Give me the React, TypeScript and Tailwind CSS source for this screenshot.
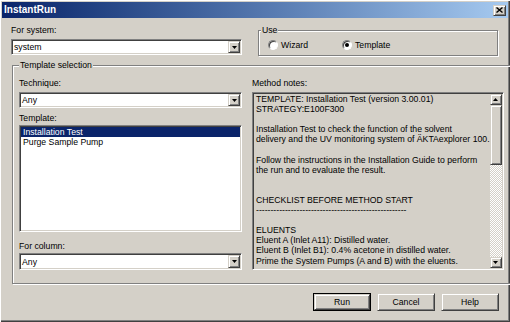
import React from "react";

const sunken =
  "border border-t-[#808080] border-l-[#808080] border-r-white border-b-white p-px shadow-[inset_1px_1px_0_#404040,inset_-1px_-1px_0_#d4d0c8]";
const raised =
  "border border-t-[#d4d0c8] border-l-[#d4d0c8] border-r-[#404040] border-b-[#404040] shadow-[inset_1px_1px_0_#fff,inset_-1px_-1px_0_#808080] bg-[#d4d0c8]";
const etched =
  "border border-[#808080] shadow-[inset_1px_1px_0_#fff,1px_1px_0_#fff]";

function Arrow({ up = false }: { up?: boolean }) {
  return (
    <svg width="5" height="3" viewBox="0 0 5 3" className={up ? "rotate-180" : ""}>
      <polygon points="0,0 5,0 2.5,3" fill="#000" />
    </svg>
  );
}

function Combo({ value, h }: { value: string; h: string }) {
  return (
    <div className={`${sunken} ${h} bg-white flex`}>
      <div className="flex-1 flex items-center pl-px">{value}</div>
      <div className={`${raised} w-[12px] flex items-center justify-center`}>
        <Arrow />
      </div>
    </div>
  );
}

function Radio({ checked, label }: { checked?: boolean; label: string }) {
  return (
    <div className="flex items-center gap-[3px] w-[74px]">
      <span className="w-[10px] h-[10px] rounded-full border border-t-[#808080] border-l-[#808080] border-r-white border-b-white bg-white shadow-[inset_1px_1px_0_#404040] flex items-center justify-center">
        {checked && <span className="w-[4px] h-[4px] rounded-full bg-black" />}
      </span>
      <span>{label}</span>
    </div>
  );
}

function Btn({ label, def }: { label: string; def?: boolean }) {
  return (
    <button className={`w-[58px] h-[18px] ${def ? "border border-black" : ""}`}>
      <span className={`${raised} w-full h-full flex items-center justify-center`}>{label}</span>
    </button>
  );
}

const notes = [
  "TEMPLATE: Installation Test (version 3.00.01)",
  "STRATEGY:E100F300",
  "",
  "Installation Test to check the function of the solvent",
  "delivery and the UV monitoring system of ÄKTAexplorer 100.",
  "",
  "Follow the instructions in the Installation Guide to perform",
  "the run and to evaluate the result.",
  "",
  "",
  "CHECKLIST BEFORE METHOD START",
  "----------------------------------------------------",
  "",
  "ELUENTS",
  "Eluent A (Inlet A11): Distilled water.",
  "Eluent B (Inlet B1): 0.4% acetone in distilled water.",
  "Prime the System Pumps (A and B) with the eluents.",
];

export default function App() {
  return (
    <div className="w-[510px] h-[322px] bg-[#d4d0c8] p-[2px] flex flex-col font-['Liberation_Sans',Arial,sans-serif] text-[8.7px] leading-[10px] text-black shadow-[inset_1px_1px_0_#fff,inset_-1px_-1px_0_#404040,inset_-2px_-2px_0_#808080]">
      {/* Title bar */}
      <div className="h-[16px] flex items-center justify-between pl-[2px] pr-[2px] bg-linear-to-r from-[#0a246a] to-[#a6caf0]">
        <span className="text-white font-bold text-[10px]">InstantRun</span>
        <span className={`${raised} w-[13px] h-[11px] flex items-center justify-center`}>
          <svg width="7" height="6" viewBox="0 0 7 6">
            <path d="M0.5 0.5 L6.5 5.5 M6.5 0.5 L0.5 5.5" stroke="#000" strokeWidth="1.4" />
          </svg>
        </span>
      </div>

      {/* Body */}
      <div className="flex-1 flex flex-col pl-[9px] pr-[9px]">
        <div className="flex mt-[7px]">
          <div className="w-[231px] flex flex-col">
            <span>For system:</span>
            <div className="mt-[4px]">
              <Combo value="system" h="h-[16px]" />
            </div>
          </div>
          <fieldset className={`${etched} ml-auto mr-px w-[240px] h-[31px]`}>
            <legend className="ml-[2px] px-px bg-[#d4d0c8]">Use</legend>
            <div className="flex mt-[5px] pl-[9px]">
              <Radio label="Wizard" />
              <Radio label="Template" checked />
            </div>
          </fieldset>
        </div>

        <fieldset className={`${etched} mt-[4px] ml-px mr-px h-[224px]`}>
          <legend className="ml-[6px] px-px bg-[#d4d0c8]">Template selection</legend>
          <div className="flex gap-[10px] pl-[6px] pr-[6px] mt-[8px]">
            <div className="w-[223px] flex flex-col">
              <span>Technique:</span>
              <div className="mt-[4px]">
                <Combo value="Any" h="h-[16px]" />
              </div>
              <span className="mt-[5px]">Template:</span>
              <div className={`${sunken} mt-[2px] h-[107px] bg-white`}>
                <div className="bg-[#0a246a] text-white pl-[2px] h-[10px]">Installation Test</div>
                <div className="pl-[2px] h-[10px]">Purge Sample Pump</div>
              </div>
              <span className="mt-[9px]">For column:</span>
              <div className="mt-[2px]">
                <Combo value="Any" h="h-[17px]" />
              </div>
            </div>
            <div className="flex-1 flex flex-col">
              <span>Method notes:</span>
              <div className={`${sunken} mt-[4px] h-[178px] flex`}>
                <div className="flex-1 pl-[2px] leading-[10.1px] overflow-hidden">
                  {notes.map((l, i) => (
                    <div key={i} className="h-[10.1px] whitespace-pre">
                      {l}
                    </div>
                  ))}
                </div>
                <div className="w-[12px] flex flex-col">
                  <div className={`${raised} h-[11px] flex items-center justify-center`}>
                    <Arrow up />
                  </div>
                  <div className={`${raised} h-[60px]`} />
                  <div className="flex-1 bg-[image:repeating-conic-gradient(#fff_0_25%,#d4d0c8_0_50%)] bg-[length:2px_2px]" />
                  <div className={`${raised} h-[11px] flex items-center justify-center`}>
                    <Arrow />
                  </div>
                </div>
              </div>
            </div>
          </div>
        </fieldset>

        <div className="flex justify-end gap-[6px] mt-[9px]">
          <Btn label="Run" def />
          <Btn label="Cancel" />
          <Btn label="Help" />
        </div>
      </div>
    </div>
  );
}
